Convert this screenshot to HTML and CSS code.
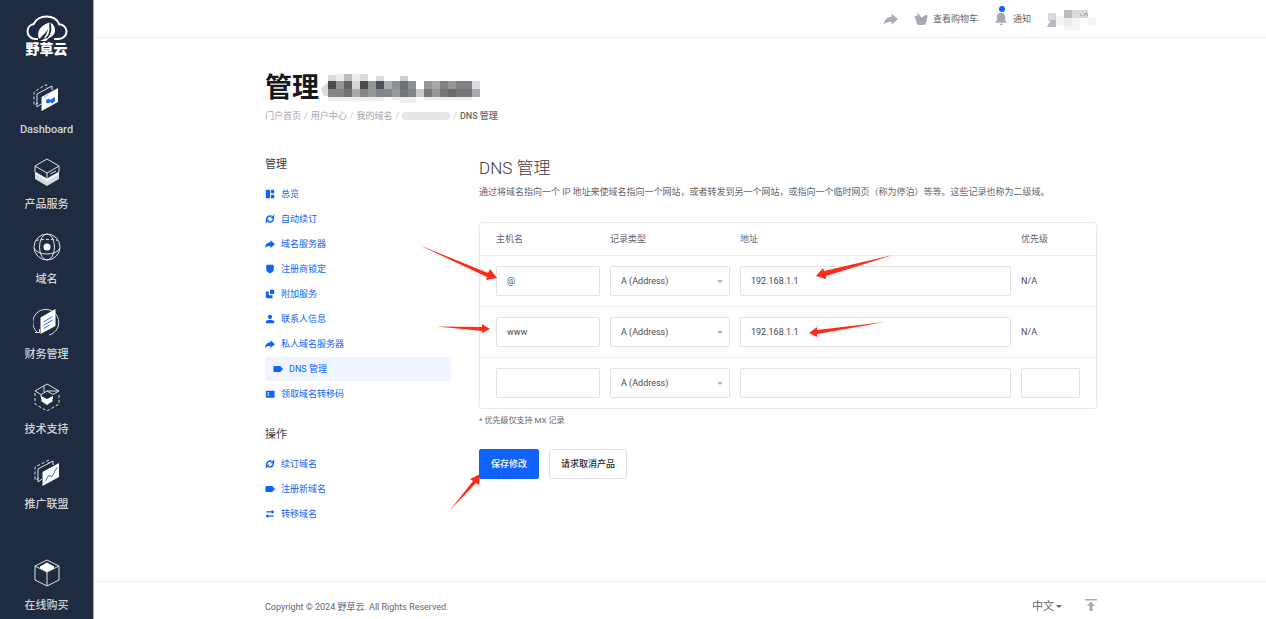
FILE: index.html
```html
<!DOCTYPE html>
<html lang="zh-CN">
<head>
<meta charset="utf-8">
<meta name="viewport" content="width=device-width, initial-scale=1">
<title>DNS 管理 - 野草云</title>
<link rel="stylesheet" href="styles.css">
</head>
<body>
<svg class="defs" aria-hidden="true">
  <symbol id="i-share" viewBox="0 0 12 12"><path d="M6.500 1.500L12 6.200l-5.500 4.600V8.300C3.500 8.200 1.500 8.800 0 10.800 .3 6.500 2.500 4.200 6.500 4z"/></symbol>
  <symbol id="i-renew" viewBox="0 0 12 12"><path d="M2.200 8C1 4.500 3.500 2 8 2.300M9.800 4C11 7.500 8.500 10 4 9.700" fill="none" stroke="#0f62fe" stroke-width="1.800"/><path d="M11 .5V5H6.200zM1 11.500V7h4.800z"/></symbol>
  <symbol id="i-tag" viewBox="0 0 12 12"><path d="M1.500 2.500h6.700c.5 0 .8.200 1.100.5L12 6 9.300 9c-.3.3-.6.500-1.100.500H1.500C.9 9.500.5 9.100.5 8.500v-5c0-.6.4-1 1-1z"/></symbol>
</svg>
<div class="app">
  <nav class="rail" aria-label="主导航">
    <a class="logo" href="#">
      <svg viewBox="0 0 42 26" width="42" height="26" aria-hidden="true">
        <path d="M12 24H9.500C5 24 1.500 20.500 1.500 16.300c0-3.800 2.800-6.800 6.300-7.400C9.500 4.600 14.500 1.500 20.500 1.500c6.300 0 11.300 3.200 12.700 7.700 4.200.3 7.300 3.400 7.300 7.300 0 4.200-3.500 7.500-8 7.500H28" fill="none" stroke="#fff" stroke-width="2"/>
        <path d="M13 23.500c-2.500-6 .5-13 10.500-16-.8 4 1.500 9-2.500 14-1 1-2 1.500-3 1.500 2-3 3.500-6 4-9-2 4-5.500 6-8 9.500zM24.500 7.500c3.500 2 5 5.500 4.500 9-.5 3-3 5.500-8.500 8 4-4.500 6-8.500 4-17zM14 26l5-2.500 4-.5-3 3z" fill="#fff"/>
      </svg>
      <span class="logo-name">野草云</span>
    </a>
    <a class="rail-item" href="#">
      <svg class="rail-icon" viewBox="0 0 28 28" aria-hidden="true"><path class="dash" d="M6 20L2 22V9L13 2l2 0v3"/><path d="M9 21l-4 3V11L20 3v4"/><path class="solid" d="M9.500 14L26 5v14l-16.500 9z"/><path class="blue-fill" d="M14 17l3-1.500 1 1.500 5-3v4l-3 2.500-1.500-1.500-2.500 1.500-2-1z"/><path class="blue-line" stroke-dasharray="1 1" d="M12 14.500l5-3"/></svg>
      <span>Dashboard</span>
    </a>
    <a class="rail-item" href="#">
      <svg class="rail-icon" viewBox="0 0 28 28" aria-hidden="true"><path class="soft" d="M2 15v6l12 7 12-7v-6l-12 7z"/><path class="solid" d="M2 14v2l12 7 12-7v-2l-12 6z"/><path class="navy" d="M14 1l12 7v6l-12 7-12-7V8z"/><path d="M2 8l12 7 12-7M14 15v6M17 16l6-3"/></svg>
      <span>产品服务</span>
    </a>
    <a class="rail-item" href="#">
      <svg class="rail-icon" viewBox="0 0 28 28" aria-hidden="true"><circle cx="14" cy="14" r="13"/><ellipse cx="14" cy="14" rx="7.500" ry="13"/><path d="M1 15c3 8 23 8 26 0"/><path class="dash" d="M3 7.500c6-1.500 16-1.500 22 0"/><circle class="solid" cx="14" cy="14" r="3.500"/></svg>
      <span>域名</span>
    </a>
    <a class="rail-item" href="#">
      <svg class="rail-icon" viewBox="0 0 28 28" aria-hidden="true"><path d="M4 24A13 13 0 1 1 16 27M2 24.500h4.500V21"/><path class="solid" d="M7.500 9.500L22.500 1v17L7.500 26z"/><path class="blue-line" d="M10.500 14l9-5.500M10.500 17.500l9-5.500M10.500 20.500l6-3.500"/></svg>
      <span>财务管理</span>
    </a>
    <a class="rail-item" href="#">
      <svg class="rail-icon" viewBox="0 0 28 28" aria-hidden="true"><path class="dash" d="M2 10v11l12 7 12-7V10"/><path d="M14 1l12 7-6 3.500-6-3.500-6 3.500L2 8zM11 3v6M8 11.500V14M26 8h-12"/><path class="solid" d="M8 13l6 3 6-3v3l-1 1 1 1-6 4-6-4 1-1-1-1z"/></svg>
      <span>技术支持</span>
    </a>
    <a class="rail-item" href="#">
      <svg class="rail-icon" viewBox="0 0 28 28" aria-hidden="true"><path class="dash" d="M6 20L2 22V9L16 2v3"/><path d="M9 21l-4 3V11L20 3v4"/><path class="solid" d="M9.500 14L26 5v14l-16.500 9z"/><path class="blue-line" d="M12.500 23l3-5.500 3.500 1 5-9"/></svg>
      <span>推广联盟</span>
    </a>
    <a class="rail-item rail-buy" href="#">
      <svg class="rail-icon" viewBox="0 0 28 28" aria-hidden="true"><path d="M14 1l12 6v14l-12 6-12-6V7zM2 7l12 6 12-6M14 13v14"/><path class="solid" d="M14 3.500l7 4v2l-7 3.500-7-3.500v-2z"/></svg>
      <span>在线购买</span>
    </a>
  </nav>

  <div class="page">
    <header class="topbar">
      <div class="wrap topbar-row">
        <a class="top-link" href="#" aria-label="分享"><svg class="top-icon" aria-hidden="true"><use href="#i-share"/></svg></a>
        <a class="top-link" href="#"><svg class="top-icon" viewBox="0 0 14 14" aria-hidden="true"><path d="M.5 4h3L2.800 1.800l1-.6L7.500 5.500l4-2.500 2 .3v1.500L12 10.500c-.4 1.600-1 2.500-2.400 2.500H5c-1.300 0-1.900-.7-2.300-2z"/></svg>查看购物车</a>
        <a class="top-link bell" href="#"><svg class="top-icon" viewBox="0 0 14 14" aria-hidden="true"><path d="M7 .8c-2.600 0-4.200 2-4.200 4.500v3L1 10.800h12l-1.800-2.500v-3C11.200 2.800 9.600.8 7 .8zM5.300 11.800h3.400c0 1.800-3.400 1.800-3.400 0z"/></svg><i class="dot"></i>通知</a>
        <svg class="account" viewBox="0 0 50 22" width="50" height="22" role="img" aria-label="账户">
          <path fill="#bcbcc0" d="M17 2h8v8h-8z"/><path fill="#dadadd" d="M25 2h16v8H25z"/><path fill="#d8d8dc" d="M1 5h8v8H1z"/><path fill="#b9bac2" d="M4 12h5v7H0l2-4z"/><path fill="#f4f5f6" d="M9 8h8v10H9zM25 10h8v8h-8zM17 18h16v4H17zM41 10h8v8h-8z"/><path fill="#ececee" d="M17 10h8v8h-8z"/><path stroke="#999" fill="none" d="M33 6l2 2M37 8l2-3 2 3"/>
        </svg>
      </div>
    </header>

    <main class="wrap content">
      <div class="title-row">
        <h1>管理</h1>
        <svg class="mosaic" viewBox="0 0 160 30" width="160" height="30" role="img" aria-label="已隐藏的域名">
          <path fill="#dfd9d4" d="M0 16l7-7v14H3z"/>
          <path fill="#dadada" d="M7 2h8v6H7z"/><path fill="#ececec" d="M15 1h8v7h-8zM31 1h8v7h-8z"/><path fill="#bdbdbf" d="M23 1h8v7h-8z"/><path fill="#dcdcdc" d="M39 1h8v7h-8zM55 3h8v5h-8z"/><path fill="#cdd0d0" d="M79 3h8v5h-8z"/>
          <path fill="#eeeeef" d="M7 24h56v4H7zM71 24h24v6H79v-3h-8zM103 24h48v3h-48z"/>
          <path fill="#4b4b4d" d="M7 8h8v8H7zM39 8h8v8h-8z"/><path fill="#959597" d="M15 8h8v8h-8zM47 8h8v8h-8z"/><path fill="#626264" d="M23 8h8v8h-8z"/><path fill="#d3d3d3" d="M31 8h8v8h-8z"/><path fill="#4d5159" d="M55 8h8v8h-8z"/><path fill="#a9aeb2" d="M63 8h8v8h-8z"/><path fill="#8c9095" d="M71 8h8v8h-8zM87 8h8v8h-8z"/><path fill="#6e6f70" d="M79 8h8v8h-8z"/><path fill="#969698" d="M103 8h8v8h-8zM127 8h8v8h-8z"/><path fill="#aaa9a9" d="M111 8h8v8h-8z"/><path fill="#818284" d="M119 8h8v8h-8zM135 8h16v8h-16z"/><path fill="#d6dbe1" d="M151 8h8v8h-8z"/>
          <path fill="#858587" d="M7 16h16v8H7zM39 16h8v8h-8zM63 16h8v8h-8z"/><path fill="#737375" d="M23 16h8v8h-8z"/><path fill="#aaa" d="M31 16h8v8h-8zM151 16h8v8h-8z"/><path fill="#989898" d="M47 16h8v8h-8zM71 16h8v8h-8zM111 16h8v8h-8z"/><path fill="#818589" d="M55 16h8v8h-8zM87 16h8v8h-8z"/><path fill="#777" d="M79 16h8v8h-8zM103 16h8v8h-8zM119 16h8v8h-8zM135 16h16v8h-16z"/><path fill="#c8c8cd" d="M95 16h8v8h-8z"/><path fill="#686a70" d="M127 16h8v8h-8z"/>
        </svg>
      </div>
      <nav class="crumbs" aria-label="面包屑">
        <a href="#">门户首页</a><span>/</span><a href="#">用户中心</a><span>/</span><a href="#">我的域名</a><span>/</span><i class="crumb-hidden"></i><span>/</span><b>DNS 管理</b>
      </nav>

      <div class="columns">
        <aside class="side">
          <h3>管理</h3>
          <ul class="menu">
            <li><a href="#"><svg viewBox="0 0 12 12" aria-hidden="true"><path d="M1 1h5v10H1zM7 1h4v4H7zM7 7h4v4H7z"/></svg>总览</a></li>
            <li><a href="#"><svg aria-hidden="true"><use href="#i-renew"/></svg>自动续订</a></li>
            <li><a href="#"><svg aria-hidden="true"><use href="#i-share"/></svg>域名服务器</a></li>
            <li><a href="#"><svg viewBox="0 0 12 12" aria-hidden="true"><path d="M2.500 1h7c.6 0 1 .4 1 1v5c0 1-.5 1.700-1.300 2.200L6 11.500 2.800 9.200C2 8.700 1.500 8 1.500 7V2c0-.6.4-1 1-1z"/></svg>注册商锁定</a></li>
            <li><a href="#"><svg viewBox="0 0 12 12" aria-hidden="true"><path d="M6 1h5v5H6zM1 3h3.500v4.500H9V11H2c-.6 0-1-.4-1-1z"/></svg>附加服务</a></li>
            <li><a href="#"><svg viewBox="0 0 12 12" aria-hidden="true"><circle cx="6" cy="3.500" r="2.500"/><path d="M1 11V9.500C1 8 2.500 7.200 6 7.200s5 .8 5 2.300V11z"/></svg>联系人信息</a></li>
            <li><a href="#"><svg aria-hidden="true"><use href="#i-share"/></svg>私人域名服务器</a></li>
            <li><a class="active" href="#" aria-current="page"><svg aria-hidden="true"><use href="#i-tag"/></svg>DNS 管理</a></li>
            <li><a href="#"><svg viewBox="0 0 12 12" aria-hidden="true"><path fill-rule="evenodd" d="M1 2h10.500v8.500H1zM3 4v1.500h2V4zM3 6.500V8h2V6.500z"/></svg>领取域名转移码</a></li>
          </ul>
          <h3>操作</h3>
          <ul class="menu">
            <li><a href="#"><svg aria-hidden="true"><use href="#i-renew"/></svg>续订域名</a></li>
            <li><a href="#"><svg aria-hidden="true"><use href="#i-tag"/></svg>注册新域名</a></li>
            <li><a href="#"><svg viewBox="0 0 12 12" aria-hidden="true"><path d="M1.500 2.700H8V1l3.500 2.500L8 6V4.300H1.500zM10.500 9.300H4V11L.5 8.500 4 6v1.700h6.500z"/></svg>转移域名</a></li>
          </ul>
        </aside>

        <section class="dns">
          <h2>DNS 管理</h2>
          <p class="lead">通过将域名指向一个 IP 地址来使域名指向一个网站，或者转发到另一个网站，或指向一个临时网页（称为停泊）等等。这些记录也称为二级域。</p>
          <form>
            <div class="panel">
              <table>
                <colgroup><col class="c-host"><col class="c-type"><col><col class="c-prio"></colgroup>
                <thead><tr><th>主机名</th><th>记录类型</th><th>地址</th><th>优先级</th></tr></thead>
                <tbody>
                  <tr>
                    <td><input type="text" value="@" aria-label="主机名 1"></td>
                    <td><div class="select"><select aria-label="记录类型 1"><option>A (Address)</option></select></div></td>
                    <td><input type="text" value="192.168.1.1" aria-label="地址 1"></td>
                    <td>N/A</td>
                  </tr>
                  <tr>
                    <td><input type="text" value="www" aria-label="主机名 2"></td>
                    <td><div class="select"><select aria-label="记录类型 2"><option>A (Address)</option></select></div></td>
                    <td><input type="text" value="192.168.1.1" aria-label="地址 2"></td>
                    <td>N/A</td>
                  </tr>
                  <tr>
                    <td><input type="text" aria-label="主机名 3"></td>
                    <td><div class="select"><select aria-label="记录类型 3"><option>A (Address)</option></select></div></td>
                    <td><input type="text" aria-label="地址 3"></td>
                    <td><input type="text" aria-label="优先级 3"></td>
                  </tr>
                </tbody>
              </table>
            </div>
            <p class="note">* 优先级仅支持 MX 记录</p>
            <div class="actions">
              <button class="btn primary" type="submit">保存修改</button>
              <button class="btn" type="button">请求取消产品</button>
            </div>
          </form>
          <svg class="arrows" viewBox="0 0 480 270" width="480" height="270" aria-hidden="true">
            <path d="M0 0L69 28 71 24 78 33 67 35 68 32z"/>
            <path d="M18 81.500L63 82V79L71 84 63 88V86z"/>
            <path d="M474 10L405 26 404 23 397 31 407 34V31z"/>
            <path d="M466 77L398 85V82L390 88 398 92V89z"/>
            <path d="M31 265L54 236 51 234 61 229 60 240 57 238z"/>
          </svg>
        </section>
      </div>
    </main>

    <footer class="footer">
      <div class="wrap footer-row">
        <span>Copyright © 2024 野草云. All Rights Reserved.</span>
        <button class="lang" type="button">中文</button>
        <a class="to-top" href="#" aria-label="返回顶部"><svg viewBox="0 0 12 14" width="12" height="14" aria-hidden="true"><path d="M0 1h12v1.400H0zM6 3.500l4 4.500H7.500v5h-3V8H2z"/></svg></a>
      </div>
    </footer>
  </div>
</div>
</body>
</html>
```
FILE: styles.css
```css
* { box-sizing: border-box; }

body {
  margin: 0;
  background: #fff;
  color: #65656d;
  font: 9px/14px Roboto, "Noto Sans CJK SC", sans-serif;
}

a { color: inherit; text-decoration: none; }
h1, h2, h3, p, ul { margin: 0; padding: 0; }
ul { list-style: none; }
button, input, select { font: inherit; color: inherit; }

.defs { position: absolute; width: 0; height: 0; }

.app { display: flex; min-height: 100vh; }

/* Left rail */
.rail {
  flex: 0 0 94px;
  display: flex;
  flex-direction: column;
  align-items: center;
  gap: 20px;
  padding: 15px 0 5px;
  background: #1e2b40;
  border-right: 1px solid #a5aab3;
  color: #d2d5d9;
  font-size: 11px;
  line-height: 16px;
}

.logo {
  display: flex;
  flex-direction: column;
  align-items: center;
  height: 48px;
  color: #fff;
}

.logo-name { font-size: 14px; line-height: 16px; font-weight: 900; }

.rail-item {
  display: flex;
  flex-direction: column;
  align-items: center;
  gap: 11px;
  font-weight: 500;
}

.rail-buy { margin-top: auto; }

.rail-icon {
  width: 28px;
  height: 28px;
  fill: none;
  stroke: #dfe2e6;
  stroke-width: 1;
}

.rail-icon .dash { stroke-dasharray: 3 2; }
.rail-icon .solid { fill: #fff; stroke: none; }
.rail-icon .soft { fill: #d5d8dd; stroke: none; }
.rail-icon .navy { fill: #1e2b40; }
.rail-icon .blue-fill { fill: #1a62ff; stroke: none; }
.rail-icon .blue-line { stroke: #2b6cff; }

/* Page frame */
.page { flex: 1; min-width: 0; display: flex; flex-direction: column; }
.wrap { width: 100%; max-width: 834px; margin: 0 auto; padding-left: 2px; }

.topbar { border-bottom: 1px solid #ececee; }

.topbar-row {
  display: flex;
  justify-content: flex-end;
  align-items: center;
  gap: 16px;
  height: 37px;
}

.top-link { display: flex; align-items: center; gap: 5px; }
.top-icon { width: 14px; height: 14px; fill: #a7a9b5; }
.bell { position: relative; }

.dot {
  position: absolute;
  left: 5px;
  top: -6px;
  width: 6px;
  height: 6px;
  border-radius: 50%;
  background: #0f62fe;
}

.content { flex: 1; padding-top: 33px; }

.title-row { display: flex; align-items: center; gap: 2px; height: 34px; }
h1 { color: #17171c; font-size: 27px; line-height: 34px; font-weight: 700; }

.crumbs {
  display: flex;
  align-items: center;
  gap: 3px;
  margin-top: 4px;
  color: #a3a4ae;
}

.crumbs span { color: #c5c6cc; }
.crumbs b { color: #65656d; font-weight: 500; }
.crumb-hidden { width: 48px; height: 8px; border-radius: 3px; background: #e6e7eb; }

.columns {
  display: grid;
  grid-template-columns: 186px minmax(0, 1fr);
  gap: 28px;
  margin-top: 33px;
}

/* Section menu */
.side { padding-top: 1px; }
.side h3 { color: #3a3a42; font-size: 11px; line-height: 16px; font-weight: 400; }

.menu {
  display: flex;
  flex-direction: column;
  gap: 1px;
  margin: 9px 0 21px;
  color: #0f62fe;
}

.menu a { display: flex; align-items: center; gap: 6px; height: 24px; }
.menu svg { width: 10px; height: 10px; fill: #0f62fe; }
.menu .active { padding-left: 8px; border-radius: 2px; background: #eff4ff; }

/* DNS records */
.dns { position: relative; }
h2 { color: #3a3a42; font-size: 17px; line-height: 24px; font-weight: 300; }
.lead { margin-top: 5px; }

.panel {
  margin-top: 23px;
  border: 1px solid #e9e9eb;
  border-radius: 3px;
}

table { width: 100%; table-layout: fixed; border-collapse: collapse; }
.c-host { width: 125px; }
.c-type { width: 130px; }
.c-prio { width: 80px; }

th { height: 32px; padding: 0 5px; font-weight: 400; text-align: left; }
td { height: 51px; padding: 0 5px; border-top: 1px solid #ececee; color: #4a4a52; }
th:first-child, td:first-child { padding-left: 16px; }
th:last-child, td:last-child { padding-right: 16px; }

td input, td select {
  display: block;
  width: 100%;
  height: 30px;
  padding: 0 10px;
  border: 1px solid #e3e3e6;
  border-radius: 2px;
  background: #fff;
}

.select { position: relative; }
.select select { appearance: none; }

.select::after {
  content: "";
  position: absolute;
  right: 7px;
  top: 14px;
  border: 3px solid transparent;
  border-top-color: #b0b1bb;
  pointer-events: none;
}

.note { margin-top: 5px; font-size: 8px; }
.actions { display: flex; gap: 10px; margin-top: 21px; }

.btn {
  height: 30px;
  padding: 0 11px;
  border: 1px solid #e3e3e6;
  border-radius: 2px;
  background: #fff;
  color: #25252b;
  font-weight: 500;
}

.btn.primary { border-color: #0f62fe; background: #0f62fe; color: #fff; }

/* Pointers drawn over the form */
.arrows {
  position: absolute;
  left: -60px;
  top: 89px;
  fill: #ff2a17;
  pointer-events: none;
}

/* Footer */
.footer { border-top: 1px solid #ececee; }
.footer-row { display: flex; align-items: center; height: 37px; padding-top: 12px; }

.lang {
  display: flex;
  align-items: center;
  gap: 2px;
  margin-left: auto;
  padding: 0;
  border: 0;
  background: none;
  font-size: 11px;
}

.lang::after {
  content: "";
  border: 3px solid transparent;
  border-top-color: #65656d;
  border-bottom: 0;
}

.to-top { margin-left: 23px; padding-bottom: 4px; fill: #a7a9b5; }
.to-top svg { display: block; }
```
